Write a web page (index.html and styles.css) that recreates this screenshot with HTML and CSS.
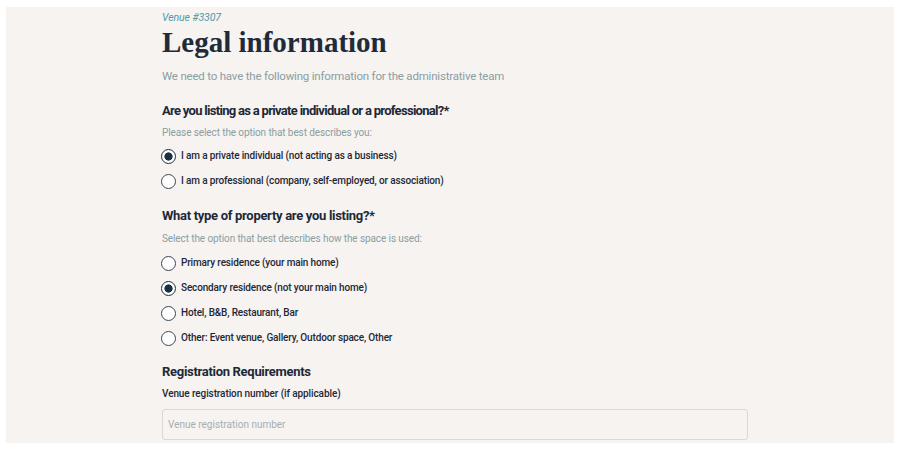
FILE: index.html
```html
<!DOCTYPE html>
<html lang="en">
<head>
<meta charset="utf-8">
<title>Legal information</title>
<link rel="stylesheet" href="styles.css">
</head>
<body>
<main class="panel">
  <div class="content">
    <p class="venue">Venue #3307</p>
    <h1 class="title">Legal information</h1>
    <p class="subtitle">We need to have the following information for the administrative team</p>

    <section class="group first">
      <h2 class="question tight">Are you listing as a private individual or a professional?*</h2>
      <p class="hint">Please select the option that best describes you:</p>
      <div class="options">
        <label class="option"><input type="radio" name="status" checked><span>I am a private individual (not acting as a business)</span></label>
        <label class="option"><input type="radio" name="status"><span>I am a professional (company, self-employed, or association)</span></label>
      </div>
    </section>

    <section class="group second">
      <h2 class="question">What type of property are you listing?*</h2>
      <p class="hint">Select the option that best describes how the space is used:</p>
      <div class="options">
        <label class="option"><input type="radio" name="type"><span>Primary residence (your main home)</span></label>
        <label class="option"><input type="radio" name="type" checked><span>Secondary residence (not your main home)</span></label>
        <label class="option"><input type="radio" name="type"><span>Hotel, B&amp;B, Restaurant, Bar</span></label>
        <label class="option"><input type="radio" name="type"><span>Other: Event venue, Gallery, Outdoor space, Other</span></label>
      </div>
    </section>

    <section class="group third">
      <h2 class="question">Registration Requirements</h2>
      <label class="field-label" for="regnum">Venue registration number (if applicable)</label>
      <input class="text-input" id="regnum" type="text" placeholder="Venue registration number">
    </section>
  </div>
</main>
</body>
</html>
```
FILE: styles.css
```css
* { box-sizing: border-box; }
html, body { margin: 0; padding: 0; background: #ffffff; }
body {
  padding: 7px 6px;
  font-family: "Roboto", "Liberation Sans", sans-serif;
  color: #1e2837;
}
.panel {
  background: #f6f3f0;
  height: 436px;
  overflow: hidden;
}
.content {
  margin-left: 156px;
  width: 586px;
  padding-top: 5px;
}
.venue {
  margin: 0;
  font-size: 10.5px;
  font-style: italic;
  color: #4c9aa8;
  line-height: 12px;
  letter-spacing: -0.1px;
}
.title {
  margin: 1px 0 0 0;
  font-family: "Liberation Serif", "DejaVu Serif", serif;
  font-weight: 700;
  font-size: 29px;
  line-height: 34px;
  color: #1f2a3a;
}
.subtitle {
  margin: 10px 0 0 0;
  font-size: 11.5px;
  line-height: 14px;
  letter-spacing: -0.2px;
  color: #8b9ea3;
}
.group { margin-top: 19px; }
.group.first { margin-top: 20px; }
.group.third { margin-top: 18px; }
.question {
  margin: 0;
  font-family: "Roboto", "Liberation Sans", sans-serif;
  font-size: 13px;
  font-weight: 700;
  line-height: 16px;
  letter-spacing: -0.3px;
  color: #1e2837;
}
.question.tight { letter-spacing: -0.7px; }
.hint {
  margin: 9px 0 0 0;
  font-size: 10px;
  line-height: 12px;
  letter-spacing: -0.1px;
  color: #8b9ea3;
}
.group.first .hint { margin-top: 8px; }
.options {
  margin-top: 9px;
  display: flex;
  flex-direction: column;
  gap: 9px;
}
.group.second .options { margin-top: 10px; }
.option {
  display: flex;
  align-items: center;
  gap: 5px;
  height: 16px;
  font-size: 10px;
  font-weight: 500;
  line-height: 16px;
  letter-spacing: -0.15px;
  color: #1e2837;
}
.option input {
  appearance: none;
  -webkit-appearance: none;
  margin: 0 0 0 -1px;
  width: 15px;
  height: 15px;
  border-radius: 50%;
  border: 1px solid #3a4854;
  background: #ffffff;
  flex: none;
}
.option input:checked {
  border: 1.5px solid #1b3040;
  background: radial-gradient(circle, #1b3040 0 3.8px, #ffffff 4.4px);
}
.field-label {
  display: block;
  margin-top: 7px;
  font-size: 10px;
  font-weight: 500;
  line-height: 14px;
  letter-spacing: -0.1px;
  color: #1e2837;
}
.text-input {
  display: block;
  margin-top: 8px;
  width: 586px;
  height: 31px;
  border: 1px solid #dcd8d4;
  border-radius: 3px;
  background: #f6f3f0;
  padding: 0 5px;
  font-family: "Roboto", "Liberation Sans", sans-serif;
  font-size: 10px;
  color: #1e2837;
}
.text-input::placeholder { color: #a6aeb2; }
```
